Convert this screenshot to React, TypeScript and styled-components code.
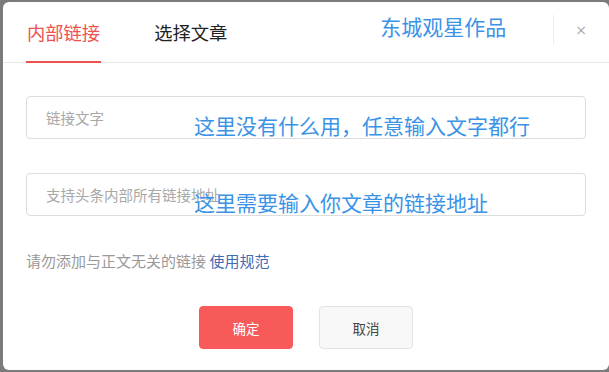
import { FC } from 'react';
import styled, { createGlobalStyle } from 'styled-components';

const GlobalStyle = createGlobalStyle`
  html, body {
    margin: 0;
    padding: 0;
    background: #7b7b7b;
    overflow: hidden;
  }
  body {
    font-family: 'Noto Sans CJK SC', 'Noto Sans', sans-serif;
  }
`;

const App: FC = () => {
  return (
    <>
      <GlobalStyle />
      <Mask>
        <Dialog>
          <Header>
            <Tab active>内部链接</Tab>
            <Tab>选择文章</Tab>
            <HeaderNote>东城观星作品</HeaderNote>
            <Divider />
            <Close>×</Close>
          </Header>
          <Body>
            <Field>
              <Input placeholder='链接文字' />
              <Note>这里没有什么用，任意输入文字都行</Note>
            </Field>
            <Field>
              <Input placeholder='支持头条内部所有链接地址' />
              <Note>这里需要输入你文章的链接地址</Note>
            </Field>
            <Tip>
              请勿添加与正文无关的链接 <TipLink>使用规范</TipLink>
            </Tip>
            <Actions>
              <Button primary>确定</Button>
              <Button>取消</Button>
            </Actions>
          </Body>
        </Dialog>
      </Mask>
    </>
  );
};

const Mask = styled.div`
  width: 609px;
  height: 372px;
  padding: 2px 0 0 3px;
  box-sizing: border-box;
  background: #7b7b7b;
`;

const Dialog = styled.div`
  width: 606px;
  height: 368px;
  background: #fff;
  border-radius: 6px;
  overflow: hidden;
`;

const Header = styled.div`
  display: flex;
  align-items: center;
  height: 60px;
  padding: 0 0 0 23px;
  border-bottom: 1px solid #e8e8e8;
  position: relative;
`;

const Tab = styled.div<{ active?: boolean }>`
  position: relative;
  height: 100%;
  display: flex;
  align-items: center;
  margin-right: 52px;
  padding: 0 1px;
  font-size: 18.3px;
  color: ${(p) => (p.active ? '#ee5151' : '#222')};
  &::after {
    content: '';
    display: ${(p) => (p.active ? 'block' : 'none')};
    position: absolute;
    left: 0;
    right: 0;
    bottom: -1px;
    height: 2px;
    background: #ee5151;
  }
`;

const HeaderNote = styled.div`
  align-self: flex-start;
  margin: 10px 0 0 100px;
  font-size: 21px;
  line-height: 28px;
  color: #3a93e6;
`;

const Divider = styled.div`
  width: 1px;
  height: 30px;
  background: #ececec;
  margin: 0 20px 4px auto;
`;

const Close = styled.div`
  width: 14px;
  margin: 0 21px 4px 0;
  font-size: 14px;
  color: #aaa;
  font-family: 'DejaVu Sans', sans-serif;
  text-align: center;
`;

const Body = styled.div`
  padding: 33px 23px 0;
`;

const Field = styled.div`
  position: relative;
  margin-bottom: 34px;
`;

const Input = styled.input`
  display: block;
  width: 100%;
  height: 43px;
  box-sizing: border-box;
  border: 1px solid #ddd;
  border-radius: 4px;
  padding: 0 19px;
  font-family: 'Noto Sans CJK SC', sans-serif;
  font-size: 14.5px;
  color: #222;
  outline: none;
  &::placeholder {
    color: #a8a8a8;
  }
`;

const Note = styled.div`
  position: absolute;
  left: 168px;
  top: 15px;
  font-size: 21px;
  line-height: 28px;
  color: #3a93e6;
  pointer-events: none;
  white-space: nowrap;
`;

const Tip = styled.div`
  margin-top: 4px;
  font-size: 15px;
  color: #999;
`;

const TipLink = styled.span`
  color: #3f6cb5;
`;

const Actions = styled.div`
  display: flex;
  justify-content: center;
  gap: 26px;
  margin-top: 35px;
`;

const Button = styled.button<{ primary?: boolean }>`
  width: 94px;
  height: 43px;
  border-radius: 4px;
  font-family: 'Noto Sans CJK SC', sans-serif;
  font-size: 13.5px;
  cursor: pointer;
  border: 1px solid ${(p) => (p.primary ? '#f85959' : '#e3e3e3')};
  background: ${(p) => (p.primary ? '#f85959' : '#f8f8f8')};
  color: ${(p) => (p.primary ? '#fff' : '#444')};
`;

export default App;
